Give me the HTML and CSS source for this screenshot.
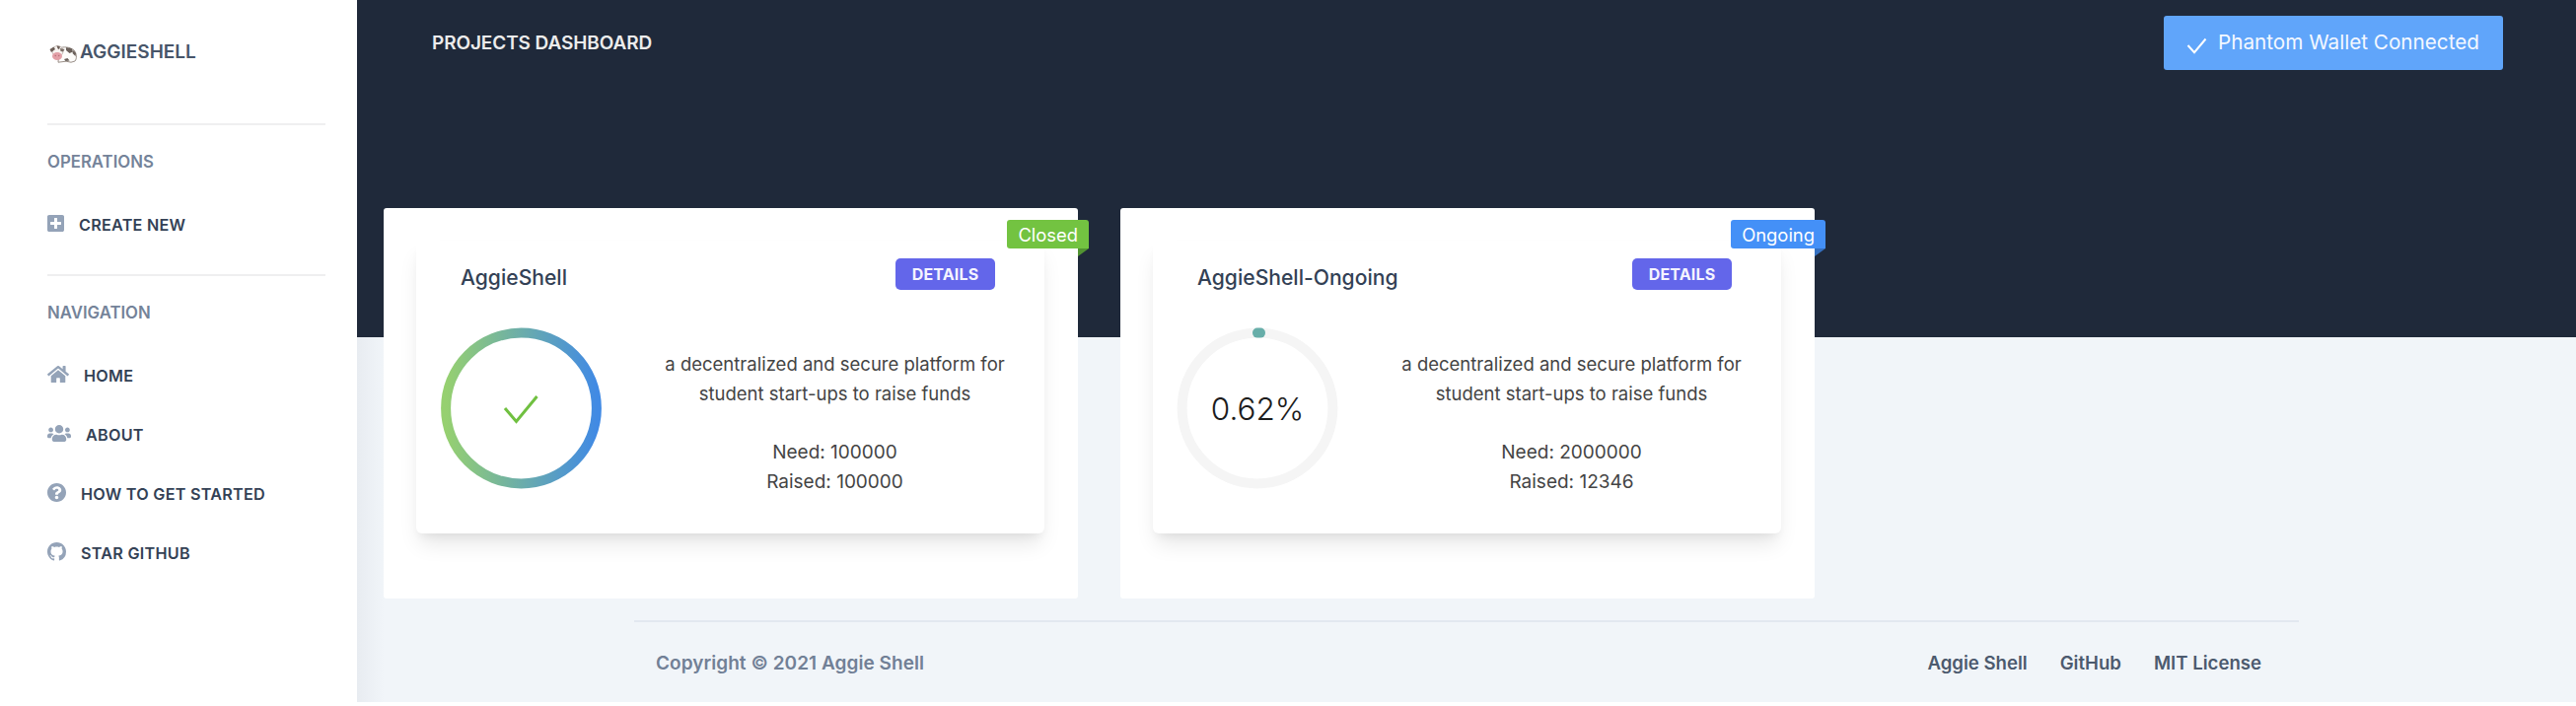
FILE: index.html
```html
<!DOCTYPE html>
<html lang="en">
<head>
<meta charset="utf-8">
<title>Projects Dashboard</title>
<link rel="stylesheet" href="styles.css">
</head>
<body>
<div class="app">
  <aside class="sidebar">
    <a class="brand">
      <svg class="cow" viewBox="0 0 28 19"><path d="M10 4C14 2 21 2.500 25 6c3 3 3 9 1 11l-4 1.200-5-1-8 1z" fill="#fdfcfa" stroke="#8d827b" stroke-width=".9"/><path d="M17 3l6 1.200 1 3.300-3.500 1.500-3.500-3zM24.500 6l2.500 3-.5 3-3-3zM15 15l3.500-1 2 2.500-4 .5z" fill="#6b615b"/><ellipse cx="8.500" cy="7" rx="5.500" ry="5.500" fill="#f8f4f1" stroke="#b3a69f" stroke-width=".7"/><path d="M.5 5l4-2.500 1.500 2.500-4 3zM7.500 1.200l3.500 1-1 3-1.500-1z" fill="#6d5f58"/><path d="M11 4l4.500 1-1.500 2.500-2.500-.5z" fill="#7a6d66"/><ellipse cx="8" cy="12" rx="5" ry="4" fill="#e3a0a7"/><circle cx="6.300" cy="11.500" r=".8" fill="#b9707b"/><circle cx="9.700" cy="11.500" r=".8" fill="#b9707b"/></svg>
      <span class="brand-name">AGGIESHELL</span>
    </a>
    <hr class="rule">
    <h6 class="group-title">OPERATIONS</h6>
    <nav class="nav">
      <a class="nav-item plus"><svg class="icon" viewBox="0 32 448 448" width="17" height="17"><path d="M400 32H48C21.500 32 0 53.500 0 80v352c0 26.500 21.500 48 48 48h352c26.500 0 48-21.500 48-48V80c0-26.500-21.500-48-48-48zm-32 252c0 6.600-5.400 12-12 12h-92v92c0 6.600-5.400 12-12 12h-56c-6.600 0-12-5.400-12-12v-92H92c-6.600 0-12-5.400-12-12v-56c0-6.600 5.400-12 12-12h92v-92c0-6.600 5.400-12 12-12h56c6.600 0 12 5.400 12 12v92h92c6.600 0 12 5.400 12 12v56z"/></svg><span>CREATE NEW</span></a>
    </nav>
    <hr class="rule second">
    <h6 class="group-title">NAVIGATION</h6>
    <nav class="nav">
      <a class="nav-item home"><svg class="icon" viewBox="0 32 576 448" width="22" height="17"><path d="M280.370 148.260L96 300.110V464a16 16 0 0 0 16 16l112.060-.29a16 16 0 0 0 15.920-16V368a16 16 0 0 1 16-16h64a16 16 0 0 1 16 16v95.640a16 16 0 0 0 16 16.050L464 480a16 16 0 0 0 16-16V300L295.670 148.260a12.190 12.190 0 0 0-15.300 0zM571.600 251.470L488 182.560V44.050a12 12 0 0 0-12-12h-56a12 12 0 0 0-12 12v72.610L318.470 43a48 48 0 0 0-61 0L4.340 251.470a12 12 0 0 0-1.600 16.900l25.500 31A12 12 0 0 0 45.150 301l235.220-193.740a12.190 12.190 0 0 1 15.300 0L530.900 301a12 12 0 0 0 16.900-1.600l25.500-31a12 12 0 0 0-1.700-16.930z"/></svg><span>HOME</span></a>
      <a class="nav-item about"><svg class="icon" viewBox="0 32 640 448" width="24" height="17"><path d="M96 224c35.300 0 64-28.700 64-64s-28.700-64-64-64-64 28.700-64 64 28.700 64 64 64zm448 0c35.300 0 64-28.700 64-64s-28.700-64-64-64-64 28.700-64 64 28.700 64 64 64zm32 32h-64c-17.600 0-33.500 7.100-45.100 18.600 40.300 22.100 68.900 62 75.100 109.400h66c17.700 0 32-14.300 32-32v-32c0-35.300-28.700-64-64-64zm-256 0c61.900 0 112-50.100 112-112S381.900 32 320 32 208 82.100 208 144s50.100 112 112 112zm76.800 32h-8.300c-20.800 10-43.900 16-68.500 16s-47.600-6-68.500-16h-8.300C179.600 288 128 339.600 128 403.200V432c0 26.500 21.500 48 48 48h288c26.500 0 48-21.500 48-48v-28.800c0-63.600-51.600-115.200-115.200-115.200zm-223.700-13.400C161.500 263.100 145.600 256 128 256H64c-35.300 0-64 28.700-64 64v32c0 17.700 14.300 32 32 32h65.900c6.300-47.400 34.900-87.300 75.200-109.400z"/></svg><span>ABOUT</span></a>
      <a class="nav-item start"><svg class="icon" viewBox="8 8 496 496" width="19" height="19"><path d="M504 256c0 136.997-111.043 248-248 248S8 392.997 8 256C8 119.083 119.043 8 256 8s248 111.083 248 248zM262.655 90c-54.497 0-89.255 22.957-116.549 63.758-3.536 5.286-2.353 12.415 2.715 16.258l34.699 26.310c5.205 3.947 12.621 3.008 16.665-2.122 17.864-22.658 30.113-35.797 57.303-35.797 20.429 0 45.698 13.148 45.698 32.958 0 14.976-12.363 22.667-32.534 33.976C247.128 238.528 216 254.941 216 296v4c0 6.627 5.373 12 12 12h56c6.627 0 12-5.373 12-12v-1.333c0-28.462 83.186-29.647 83.186-106.667 0-58.002-60.165-102-116.531-102zM256 338c-25.365 0-46 20.635-46 46 0 25.364 20.635 46 46 46s46-20.636 46-46c0-25.365-20.635-46-46-46z"/></svg><span>HOW TO GET STARTED</span></a>
      <a class="nav-item star"><svg class="icon" viewBox="0 0 16 16" width="19" height="19"><path d="M8 0C3.580 0 0 3.580 0 8c0 3.540 2.290 6.530 5.470 7.590.4.070.55-.17.55-.38 0-.19-.01-.82-.01-1.490-2.010.37-2.530-.49-2.690-.94-.09-.23-.48-.94-.82-1.130-.28-.15-.68-.52-.01-.53.63-.01 1.080.58 1.230.82.72 1.210 1.870.87 2.330.66.070-.52.28-.87.51-1.070-1.780-.2-3.640-.89-3.640-3.950 0-.87.31-1.590.82-2.150-.08-.2-.36-1.020.08-2.120 0 0 .67-.21 2.200.82.64-.18 1.320-.27 2-.27.68 0 1.360.09 2 .27 1.530-1.040 2.200-.82 2.200-.82.44 1.100.16 1.920.08 2.120.51.56.82 1.270.82 2.150 0 3.070-1.870 3.750-3.650 3.950.29.25.54.73.54 1.480 0 1.070-.01 1.930-.01 2.200 0 .21.15.46.55.38A8.013 8.013 0 0 0 16 8c0-4.420-3.580-8-8-8z"/></svg><span>STAR GITHUB</span></a>
    </nav>
  </aside>

  <main class="main">
    <header class="hero">
      <span class="page-title">PROJECTS DASHBOARD</span>
      <button class="wallet"><svg class="wallet-check" viewBox="0 0 21 17"><path d="M1.500 8L8 15.200 19.500 1.500" fill="none" stroke="#fff" stroke-width="2"/></svg><span>Phantom Wallet Connected</span></button>
    </header>

    <section class="cards">
      <article class="card">
        <div class="ribbon closed"><span>Closed</span></div>
        <div class="panel">
          <div class="panel-head"><h3 class="title"><span>AggieShell</span></h3><button class="details"><span>DETAILS</span></button></div>
          <div class="panel-body">
            <div class="progress">
              <svg class="ring" viewBox="0 0 164 164"><defs><linearGradient id="done" x1="0" y1="0" x2="1" y2="0"><stop offset="0" stop-color="#96d070"/><stop offset="1" stop-color="#418ae4"/></linearGradient></defs><circle cx="82.500" cy="82" r="76.400" fill="none" stroke="url(#done)" stroke-width="10"/><path d="M66 82L77.500 95.500 98.500 70" fill="none" stroke="#70c040" stroke-width="3"/></svg>
            </div>
            <div class="text"><p><span>a decentralized and secure platform for</span><br><span>student start-ups to raise funds</span></p><p class="sums"><span>Need: 100000</span><br><span>Raised: 100000</span></p></div>
          </div>
        </div>
      </article>
      <article class="card">
        <div class="ribbon ongoing"><span>Ongoing</span></div>
        <div class="panel">
          <div class="panel-head"><h3 class="title"><span>AggieShell-Ongoing</span></h3><button class="details"><span>DETAILS</span></button></div>
          <div class="panel-body">
            <div class="progress">
              <svg class="ring" viewBox="0 0 164 164"><circle cx="82" cy="82" r="76.400" fill="none" stroke="#f5f5f5" stroke-width="10"/><path d="M82 5.600h3" fill="none" stroke="#67aea9" stroke-width="10" stroke-linecap="round"/></svg>
              <span class="percent">0.62%</span>
            </div>
            <div class="text"><p><span>a decentralized and secure platform for</span><br><span>student start-ups to raise funds</span></p><p class="sums"><span>Need: 2000000</span><br><span>Raised: 12346</span></p></div>
          </div>
        </div>
      </article>
    </section>

    <footer class="footer">
      <span class="copyright">Copyright © 2021 Aggie Shell</span>
      <div class="links"><span>Aggie Shell</span><span>GitHub</span><span>MIT License</span></div>
    </footer>
  </main>
</div>
</body>
</html>
```
FILE: styles.css
```css
* { box-sizing: border-box; }
body { margin: 0; background: #fff; font-family: Inter, "Liberation Sans", sans-serif; color: #444; }
h3, h6, p { margin: 0; }
button { border: 0; font-family: inherit; }
.app { display: flex; height: 712px; }

.sidebar { width: 362px; flex: none; padding: 32px 32px 0 48px; background: #fff; }
.brand { display: flex; align-items: center; height: 40px; padding-left: 2px; color: #475569; font-size: 19px; font-weight: 600; }
.cow { width: 28px; height: 19px; margin: 4px 3px 0 0; }
.rule { height: 2px; border: 0; margin: 53px 0 22px; background: #efeff0; width: 282px; }
.rule.second { margin: 20px 0 22px; }
.group-title { height: 30px; line-height: 30px; font-size: 16.8px; font-weight: 600; color: #748399; margin-bottom: 19px; }
.nav-item { display: flex; align-items: center; height: 60px; font-size: 16.2px; letter-spacing: .25px; font-weight: 600; color: #334155; }
.icon { fill: #94a3b8; margin-bottom: 3px; }
.nav-item span { margin-bottom: 1px; }
.plus .icon { margin-right: 15px; }
.home .icon { margin-right: 15px; }
.about .icon { margin-right: 15px; }
.start .icon { margin-right: 15px; }
.star .icon { margin-right: 15px; }

.main { flex: 1; background: linear-gradient(90deg, #e8ecf1, #f1f5f9 28px); }
.hero { height: 342px; background: #1f293a; padding: 16px 74px 0 76px; display: flex; justify-content: space-between; align-items: flex-start; }
.page-title { color: #ececec; font-size: 19px; letter-spacing: -.1px; font-weight: 600; line-height: 55px; }
.wallet { width: 344px; height: 55px; border-radius: 3px; background: #60a5fa; color: #f4f8ff; font-size: 20.7px; display: flex; align-items: center; padding: 0 0 2px 23px; }
.wallet-check { width: 21px; height: 17px; margin: 8px 11px 0 0; }

.cards { display: flex; gap: 43px; margin-top: -131px; padding-left: 27px; }
.card { position: relative; width: 704px; height: 396px; padding: 33px; background: #fff; border-radius: 3px; }
.panel { height: 297px; width: 637px; border-radius: 6px; background: #fff; box-shadow: 0 14px 21px -4px rgba(0, 0, 0, .1), 0 6px 9px -3px rgba(0, 0, 0, .05); }
.panel-head { display: flex; justify-content: space-between; align-items: flex-start; padding: 18px 50px 0 45px; height: 88px; }
.title { font-size: 21.1px; line-height: 40px; font-weight: 500; color: #334155; }
.details { width: 101px; height: 32px; border-radius: 5px; background: #6366ea; color: #f4f4ff; font-size: 16px; letter-spacing: .15px; font-weight: 700; padding: 0; }
.panel-body { display: flex; padding-left: 24px; }
.progress { position: relative; width: 164px; height: 164px; }
.ring { display: block; width: 164px; height: 164px; }
.percent { position: absolute; inset: 0; display: grid; place-items: center; font-size: 31.5px; font-weight: 300; color: #1c1c1c; }
.text { flex: 1; padding: 22px 0 0 24px; text-align: center; font-size: 18.5px; line-height: 30px; }
.sums { margin-top: 30px; font-size: 19px; }
.ribbon { position: absolute; top: 12px; right: -11px; height: 29px; line-height: 30px; padding: 0 11px; border-radius: 3px 3px 0 3px; color: #fff; font-size: 18.4px; }
.ribbon::after { content: ""; position: absolute; right: 0; top: 100%; width: 11px; height: 8px; clip-path: polygon(0 0, 100% 0, 0 100%); }
.closed { background: #73c341; }
.closed::after { background: #529432; }
.ongoing { background: #4490f7; }
.ongoing::after { background: #3570c0; }

.footer { width: 1688px; margin: 22px 0 0 281px; padding: 2px 38px 0 22px; border-top: 2px solid #e2e8f0; height: 82px; display: flex; justify-content: space-between; align-items: center; font-size: 19px; font-weight: 600; color: #718096; }
.copyright { letter-spacing: .05px; }
.links { display: flex; gap: 33px; font-size: 18.6px; color: #4c5a6e; }
```
